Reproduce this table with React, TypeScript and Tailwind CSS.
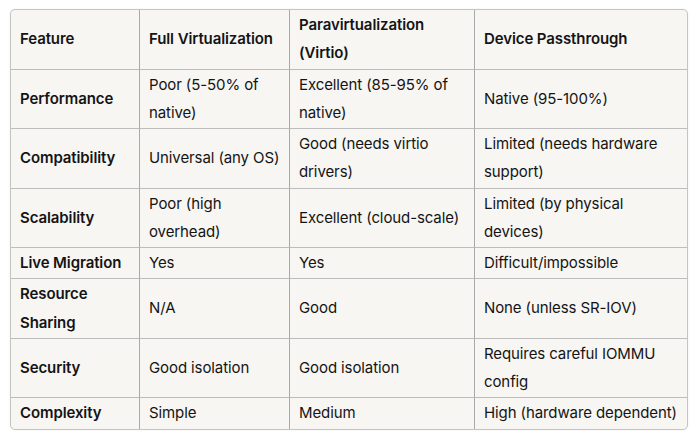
import React from "react";

const header = ["Feature", "Full Virtualization", "Paravirtualization (Virtio)", "Device Passthrough"];

const rows: string[][] = [
  ["Performance", "Poor (5-50% of native)", "Excellent (85-95% of native)", "Native (95-100%)"],
  ["Compatibility", "Universal (any OS)", "Good (needs virtio drivers)", "Limited (needs hardware support)"],
  ["Scalability", "Poor (high overhead)", "Excellent (cloud-scale)", "Limited (by physical devices)"],
  ["Live Migration", "Yes", "Yes", "Difficult/impossible"],
  ["Resource Sharing", "N/A", "Good", "None (unless SR-IOV)"],
  ["Security", "Good isolation", "Good isolation", "Requires careful IOMMU config"],
  ["Complexity", "Simple", "Medium", "High (hardware dependent)"],
];

export default function App() {
  const all = [header, ...rows];
  return (
    <div className="w-[700px] h-[439px] bg-white pt-[9px] pl-[10px]" style={{ fontFamily: "Inter, 'Noto Sans', sans-serif" }}>
      <div className="w-[678px] rounded-[5px] border border-[#c4c4c4] bg-[#f7f6f3] overflow-hidden shadow-[0_0_2px_rgba(0,0,0,0.08)]">
        <div className="grid grid-cols-[129px_150px_185px_212px] text-[15px] leading-[28.25px] text-[#141414] tracking-[-0.1px]">
          {all.map((r, ri) =>
            r.map((c, ci) => (
              <div
                key={ri + "-" + ci}
                className={
                  "flex items-center px-[9px] py-[1px] " +
                  (ci < 3 ? "border-r border-r-[#a9a9a9] " : "") +
                  (ri < all.length - 1 ? "border-b border-b-[#bdbdbd] " : "") +
                  (ri === 0 || ci === 0 ? "font-semibold" : "font-normal")
                }
              >
                <span>{c}</span>
              </div>
            ))
          )}
        </div>
      </div>
    </div>
  );
}
